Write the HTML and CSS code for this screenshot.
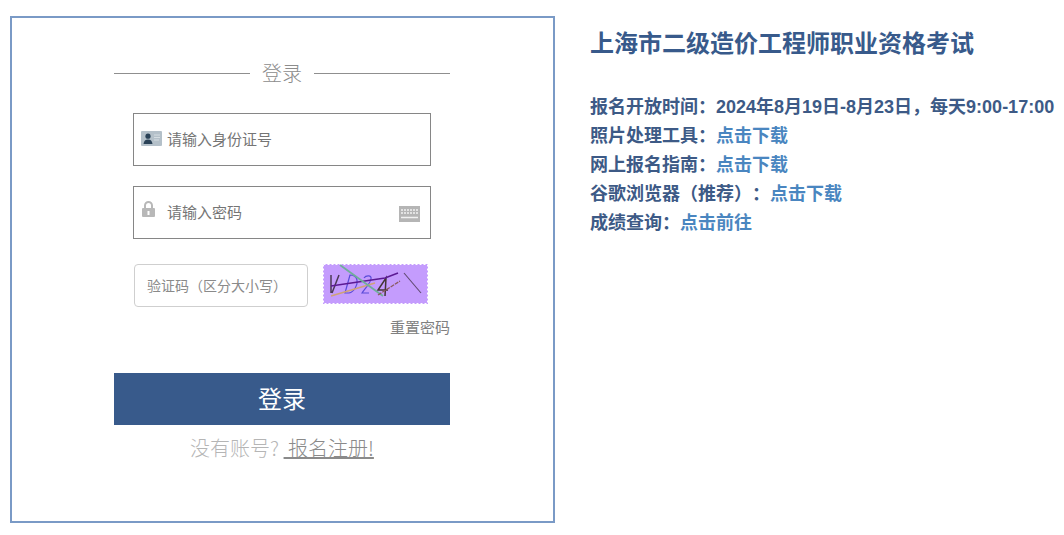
FILE: index.html
```html
<!DOCTYPE html>
<html lang="zh-CN">
<head>
<meta charset="utf-8">
<title>上海市二级造价工程师职业资格考试</title>
<link rel="stylesheet" href="styles.css">
</head>
<body>
<main class="page">
  <section class="panel">
    <div class="login-title"><span class="rule"></span><span class="login-title-text">登录</span><span class="rule"></span></div>
    <div class="field">
      <svg class="icon-id" viewBox="0 0 21 15" width="21" height="15"><rect width="21" height="15" rx="1" fill="#b4c0c9"/><circle cx="7" cy="5.2" r="2.6" fill="#2a4257"/><path d="M2.500 13c.3-3 2-4.400 4.500-4.400s4.200 1.400 4.500 4.400z" fill="#2a4257"/><path d="M13 4h6M13 6.500h6M13 9h5" stroke="#d5dde2" stroke-width="1"/></svg>
      <span class="placeholder">请输入身份证号</span>
    </div>
    <div class="field field-pass">
      <svg class="icon-lock" viewBox="0 0 13 16" width="13" height="16"><path d="M3 7V4.500a3.500 3.500 0 0 1 7 0V7" fill="none" stroke="#b8b8b8" stroke-width="2"/><rect x="0" y="7" width="13" height="9" rx="1" fill="#b8b8b8"/><rect x="5.500" y="10" width="2" height="4" fill="#fff"/></svg>
      <span class="placeholder">请输入密码</span>
      <svg class="icon-keys" viewBox="0 0 21 16" width="21" height="16"><rect width="21" height="16" fill="#b5b5b5"/><path d="M2 4h17M2 7h17" stroke="#f1f1f1" stroke-width="1.500" stroke-dasharray="2 1"/><path d="M2 11.500h17" stroke="#f1f1f1" stroke-width="1.500"/></svg>
    </div>
    <div class="captcha-row">
      <div class="captcha-input">验证码&#xFF08;区分大小写&#xFF09;</div>
      <svg class="captcha" viewBox="0 0 105 40" width="105" height="40">
        <rect width="105" height="40" fill="#c49cfd"/>
        <rect x="0.500" y="0.500" width="104" height="39" fill="none" stroke="#fff" stroke-dasharray="2 2"/>
        <path d="M8 11v18M9 29L16 11" stroke="#4b3a55" stroke-width="1.500" fill="none"/>
        <path d="M27 11l-5 18h4c5-1 9-8 8-13-1-4-3-5-7-5z" stroke="#5a4bd8" stroke-width="1.200" fill="none"/>
        <path d="M41 14c2-3 8-3 7 1-1 5-6 9-9 14h7" stroke="#5a4bd8" stroke-width="1.200" fill="none"/>
        <path d="M62 32l1-18-8 12h10" stroke="#443636" stroke-width="1.500" fill="none"/>
        <path d="M8 22L62 14 75 9" stroke="#5c1a94" stroke-width="1.500" fill="none"/>
        <path d="M8 32L52 19" stroke="#cfa278" stroke-width="1.500"/>
        <path d="M17 1L60 32" stroke="#6fae9a" stroke-width="1.800"/>
        <path d="M55 31L77 17" stroke="#8a5a60" stroke-width="1.300" stroke-dasharray="4 1" fill="none"/>
        <path d="M81 9L98 29" stroke="#5f4a70" stroke-width="1.100"/>
      </svg>
    </div>
    <div class="reset-row"><a class="reset">重置密码</a></div>
    <button class="submit" type="button">登录</button>
    <p class="register">没有账号? <a class="register-link">&nbsp;报名注册!</a></p>
  </section>
  <section class="info">
    <h1 class="info-title">上海市二级造价工程师职业资格考试</h1>
    <ul class="info-list">
      <li>报名开放时间&#xFF1A;2024年8月19日-8月23日&#xFF0C;每天9:00-17:00</li>
      <li>照片处理工具&#xFF1A;<a class="dl">点击下载</a></li>
      <li>网上报名指南&#xFF1A;<a class="dl">点击下载</a></li>
      <li>谷歌浏览器&#xFF08;推荐&#xFF09;&#xFF1A;<a class="dl">点击下载</a></li>
      <li>成绩查询&#xFF1A;<a class="dl">点击前往</a></li>
    </ul>
  </section>
</main>
</body>
</html>
```
FILE: styles.css
```css
* { box-sizing: border-box; }
html, body { margin: 0; background: #fff; overflow: hidden; }
body { font-family: "Liberation Sans", "Noto Sans CJK SC", sans-serif; text-spacing-trim: space-all; }
.page { display: flex; align-items: flex-start; padding: 16px 0 0 10px; gap: 35px; }
.panel {
  width: 545px; height: 507px; border: 2px solid #7a9ac6;
  padding: 41px 103px 0 102px; display: flex; flex-direction: column;
  font-family: "Noto Sans CJK SC", sans-serif;
}
.login-title { display: flex; align-items: center; height: 28px; gap: 12px; }
.rule { flex: 1; height: 1px; background: #8f8f8f; }
.login-title-text { font-size: 20px; line-height: 28px; color: #8c8c8c; font-weight: 300; }
.field {
  margin: 26px 0 0 19px; width: 298px; height: 53px; border: 1px solid #868686;
  display: flex; align-items: flex-start; padding: 17px 0 0 7px;
}
.field-pass { margin-top: 20px; padding: 14px 0 0 8px; }
.icon-id { margin-right: 5px; flex: none; }
.icon-lock { margin-right: 12px; flex: none; }
.placeholder { font-size: 15px; line-height: 18px; color: #757575; margin-top: -1px; }
.field-pass .placeholder { margin-top: 2px; }
.icon-keys { margin-left: auto; margin-right: 10px; margin-top: 5px; flex: none; }
.captcha-row { display: flex; align-items: flex-start; margin: 25px 0 0 20px; gap: 15px; }
.captcha-input {
  width: 174px; height: 43px; border: 1px solid #cfcfcf; border-radius: 4px;
  font-size: 14px; line-height: 41px; color: #8a8a8a; padding-left: 12px; white-space: nowrap;
}
.reset-row { display: flex; justify-content: flex-end; margin-top: 10px; }
.reset { font-size: 15px; line-height: 20px; color: #808080; }
.submit {
  display: block; width: 336px; height: 52px; margin-top: 36px; border: 0; padding: 0 0 3px;
  background: #385a8b; color: #fff; font: inherit; font-size: 24px;
}
.register { margin: 9px 0 0; font-size: 20px; line-height: 28px; color: #b5b5b5; text-align: center; font-weight: 300; }
.register-link { color: #8a8a8a; text-decoration: underline; }
.info { width: 474px; }
.info-title { margin: 11px 0 0; font-size: 24px; line-height: 34px; font-weight: 700; color: #385a8b; }
.info-list { list-style: none; margin: 32px 0 0; padding: 0; font-size: 18px; line-height: 29px; font-weight: 700; color: #3d5a86; white-space: nowrap; }
.dl { color: #4a86c0; }
```
